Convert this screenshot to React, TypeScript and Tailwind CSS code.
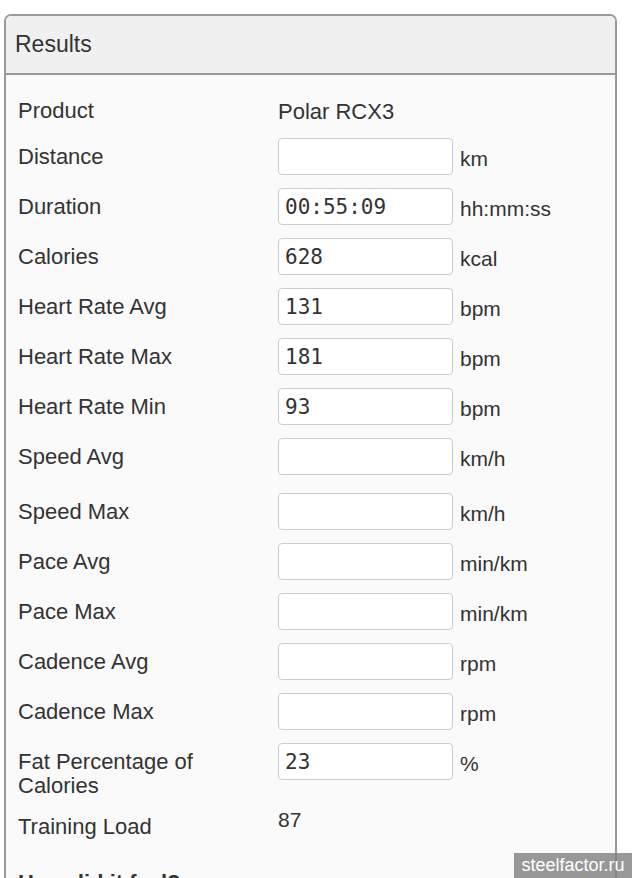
import React from "react";

type Row = {
  label: string;
  value?: string;
  unit: string;
  extra?: boolean;
};

const rows: Row[] = [
  { label: "Distance", unit: "km" },
  { label: "Duration", value: "00:55:09", unit: "hh:mm:ss" },
  { label: "Calories", value: "628", unit: "kcal" },
  { label: "Heart Rate Avg", value: "131", unit: "bpm" },
  { label: "Heart Rate Max", value: "181", unit: "bpm" },
  { label: "Heart Rate Min", value: "93", unit: "bpm" },
  { label: "Speed Avg", unit: "km/h", extra: true },
  { label: "Speed Max", unit: "km/h" },
  { label: "Pace Avg", unit: "min/km" },
  { label: "Pace Max", unit: "min/km" },
  { label: "Cadence Avg", unit: "rpm" },
  { label: "Cadence Max", unit: "rpm" },
  { label: "Fat Percentage of Calories", value: "23", unit: "%" },
];

function FieldRow({ row }: { row: Row }) {
  return (
    <div className={`flex ${row.extra ? "mb-[18px]" : "mb-[13px]"}`}>
      <label className="w-[260px] shrink-0 pt-[7px] pr-[60px] text-[22px] leading-[24px] text-[#333]">
        {row.label}
      </label>
      <input
        type="text"
        defaultValue={row.value}
        className="w-[175px] h-[37px] shrink-0 rounded-[4px] border border-[#cccccc] bg-white pl-[6px] text-[21px] text-[#333] outline-none"
        style={{ fontFamily: '"DejaVu Sans Mono", monospace' }}
      />
      <span className="pl-[7px] pt-[9px] text-[21px] leading-[24px] text-[#333]">
        {row.unit}
      </span>
    </div>
  );
}

export default function App() {
  return (
    <div
      className="relative h-[878px] w-[632px] overflow-hidden bg-white pt-[14px] pl-[4px]"
      style={{ fontFamily: '"Liberation Sans", Arial, sans-serif' }}
    >
      {/* ── Results panel ── */}
      <div className="w-[613px] rounded-t-[7px] border-2 border-[#9a9a9a] bg-[#fafafa]">
        <div className="flex h-[59px] items-center rounded-t-[5px] border-b-2 border-[#9a9a9a] bg-[#f0f0f0] pl-[9px]">
          <span className="text-[23px] text-[#333]">Results</span>
        </div>

        <div className="pl-[12px] pt-[24px]">
          {/* Product */}
          <div className="mb-[14px] flex">
            <span className="w-[260px] shrink-0 text-[22px] leading-[24px] text-[#333]">Product</span>
            <span className="pt-[1px] text-[22px] leading-[24px] text-[#333]">Polar RCX3</span>
          </div>

          {rows.map((r) => (
            <FieldRow key={r.label} row={r} />
          ))}

          {/* Training Load */}
          <div className="flex pt-[4px]">
            <span className="w-[260px] shrink-0 text-[22px] leading-[24px] text-[#333]">Training Load</span>
            <span className="-mt-[7px] text-[21px] leading-[24px] text-[#333]">87</span>
          </div>

          <h3 className="mt-[32px] text-[22px] font-bold leading-[24px] text-[#333]">How did it feel?</h3>
          <div className="h-[200px]" />
        </div>
      </div>

      {/* watermark */}
      <div className="absolute bottom-0 right-0 flex h-[25px] w-[118px] items-center justify-center bg-[#808080]/80 text-[18px] text-white">
        steelfactor.ru
      </div>
    </div>
  );
}
